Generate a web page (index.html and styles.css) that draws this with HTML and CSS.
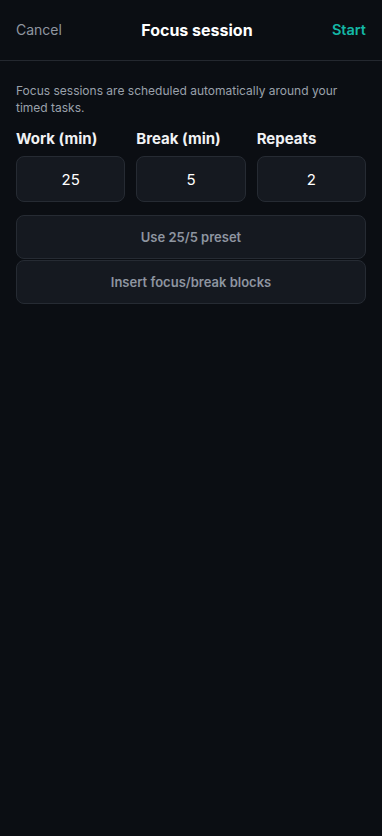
FILE: index.html
```html
<!DOCTYPE html>
<html>
<head>
<meta charset="utf-8">
<link rel="stylesheet" href="styles.css">
</head>
<body>
<div class="screen">
  <header class="header">
    <span class="cancel">Cancel</span>
    <span class="title">Focus session</span>
    <span class="start">Start</span>
  </header>
  <main class="content">
    <p class="desc">Focus sessions are scheduled automatically around your timed tasks.</p>
    <div class="fields">
      <div class="field">
        <div class="label">Work (min)</div>
        <div class="input">25</div>
      </div>
      <div class="field">
        <div class="label">Break (min)</div>
        <div class="input">5</div>
      </div>
      <div class="field">
        <div class="label">Repeats</div>
        <div class="input">2</div>
      </div>
    </div>
    <div class="actions">
      <div class="btn">Use 25/5 preset</div>
      <div class="btn">Insert focus/break blocks</div>
    </div>
  </main>
</div>
</body>
</html>
```

FILE: styles.css
```css
html, body {
  margin: 0;
  padding: 0;
  background: #0b0e13;
}
body {
  font-family: Inter, "Noto Sans", sans-serif;
  color: #f3f4f6;
}
.screen {
  width: 382px;
  min-height: 836px;
  background: #0b0e13;
}
.header {
  height: 61px;
  box-sizing: border-box;
  border-bottom: 1px solid #24282f;
  display: flex;
  align-items: center;
  justify-content: space-between;
  padding: 0 16px 1px;
}
.cancel {
  font-size: 14px;
  color: #8f96a0;
  font-weight: 400;
}
.title {
  font-size: 16px;
  font-weight: 700;
  color: #ffffff;
}
.start {
  font-size: 14.5px;
  font-weight: 600;
  color: #14b8a6;
}
.content {
  padding: 0 16px;
}
.desc {
  margin: 21px 0 0;
  font-size: 12px;
  line-height: 17px;
  color: #9aa1ab;
}
.fields {
  margin-top: 13px;
  display: grid;
  grid-template-columns: 1fr 1fr 1fr;
  gap: 11px;
}
.label {
  font-size: 15px;
  font-weight: 700;
  color: #f1f2f4;
  line-height: 20px;
}
.input {
  margin-top: 7px;
  height: 46px;
  box-sizing: border-box;
  border: 1px solid #262b33;
  border-radius: 8px;
  background: #151920;
  display: flex;
  align-items: center;
  justify-content: center;
  font-size: 15px;
  color: #ffffff;
}
.actions {
  margin-top: 13px;
  display: flex;
  flex-direction: column;
  gap: 1px;
}
.btn {
  height: 44px;
  box-sizing: border-box;
  border: 1px solid #262b33;
  border-radius: 8px;
  background: #151920;
  display: flex;
  align-items: center;
  justify-content: center;
  font-size: 13px;
  font-weight: 600;
  color: #8e95a0;
}
```
